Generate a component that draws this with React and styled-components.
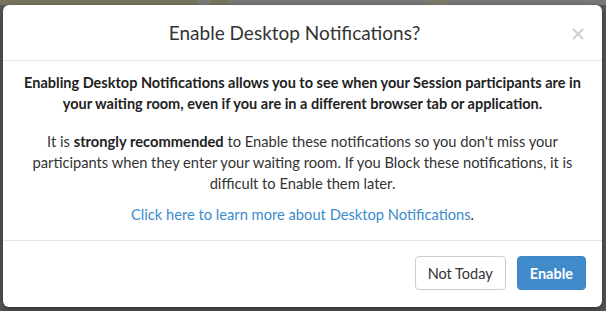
import React from "react";
import styled, { createGlobalStyle } from "styled-components";

const GlobalStyle = createGlobalStyle`
  html, body {
    margin: 0;
    padding: 0;
    height: 311px;
    overflow: hidden;
  }
  body {
    font-family: Lato, "Open Sans", sans-serif;
    background:
      linear-gradient(to right, #78765f 0, #78765f 197px, #7d7d7d 197px, #7d7d7d 210px, #78765f 210px, #78765f 229px, #7a7a7a 229px, #7a7a7a 428px, #7f7d6a 428px, #7f7d6a 448px, #7a7a7a 448px) top / 100% 5px no-repeat,
      #5a5a5a;
  }
`;

const Stage = styled.div`
  padding: 5px 4px 4px 3px;
`;

const Modal = styled.div`
  width: 599px;
  background: #fff;
  border-radius: 6px;
  box-shadow: 0 3px 9px rgba(0, 0, 0, 0.5);
  overflow: hidden;
  color: #333;
`;

const Header = styled.div`
  position: relative;
  height: 55px;
  display: flex;
  align-items: center;
  justify-content: center;
  padding-right: 16px;
  border-bottom: 1px solid #e5e5e5;
`;

const Title = styled.h4`
  margin: 0;
  font-size: 19px;
  font-weight: 400;
  color: #333;
`;

const Close = styled.button`
  position: absolute;
  right: 17px;
  top: 22px;
  width: 14px;
  height: 14px;
  border: 0;
  background: none;
  padding: 0;
  display: flex;
  cursor: pointer;
`;

const Body = styled.div`
  padding: 11px 18px 15px;
  text-align: center;
  font-size: 14.7px;
  line-height: 21px;
`;

const Para = styled.p`
  margin: ${(p) => p.$top || 0}px 0 0;
  font-weight: ${(p) => (p.$bold ? 700 : 400)};
  font-size: ${(p) => (p.$bold ? "14.5px" : "14.7px")};
  color: ${(p) => (p.$bold ? "#222" : "#333")};
  strong {
    font-weight: 700;
    color: #222;
  }
`;

const Link = styled.a`
  color: #3a8cd0;
  text-decoration: none;
`;

const Footer = styled.div`
  display: flex;
  justify-content: flex-end;
  gap: 11px;
  padding: 15px 16px 17px;
  border-top: 1px solid #e5e5e5;
`;

const Button = styled.button`
  height: 34px;
  padding: 0 12px;
  font-family: inherit;
  font-size: 14.5px;
  border-radius: 4px;
  cursor: pointer;
  border: 1px solid ${(p) => (p.$primary ? "#3b85c6" : "#ccc")};
  background: ${(p) => (p.$primary ? "#428bca" : "#fff")};
  color: ${(p) => (p.$primary ? "#fff" : "#333")};
  font-weight: ${(p) => (p.$primary ? 700 : 400)};
`;

export default function App() {
  return (
    <Stage>
      <GlobalStyle />
      <Modal>
        <Header>
          <Title>Enable Desktop Notifications?</Title>
          <Close aria-label="Close">
            <svg width="14" height="14" viewBox="0 0 14 14">
              <path d="M2 2L12 12M12 2L2 12" stroke="#cfcfcf" strokeWidth="2" fill="none" />
            </svg>
          </Close>
        </Header>
        <Body>
          <Para $bold>
            Enabling Desktop Notifications allows you to see when your Session participants are in
            your waiting room, even if you are in a different browser tab or application.
          </Para>
          <Para $top={17}>
            It is <strong>strongly recommended</strong> to Enable these notifications so you don't miss your
            participants when they enter your waiting room. If you Block these notifications, it is
            difficult to Enable them later.
          </Para>
          <Para $top={10}>
            <Link href="#">Click here to learn more about Desktop Notifications</Link>.
          </Para>
        </Body>
        <Footer>
          <Button>Not Today</Button>
          <Button $primary>Enable</Button>
        </Footer>
      </Modal>
    </Stage>
  );
}
